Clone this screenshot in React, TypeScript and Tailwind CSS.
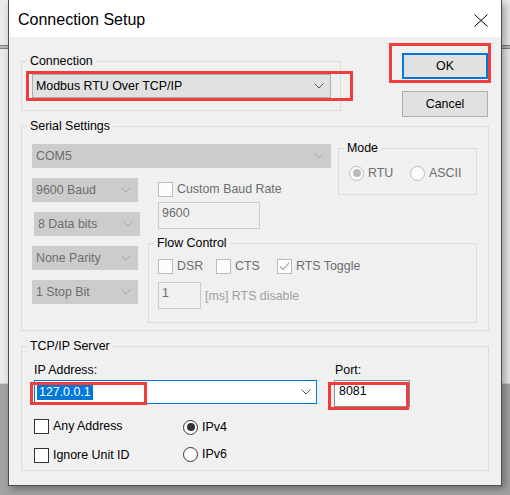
import type { ReactNode } from 'react';

function Chevron({ color }: { color: string }) {
  return (
    <svg width="10" height="6" viewBox="0 0 10 6" className="shrink-0">
      <polyline points="0.5,0.5 5,5 9.5,0.5" fill="none" stroke={color} strokeWidth="1" />
    </svg>
  );
}

function GroupBox({
  label,
  className,
  children,
}: {
  label: string;
  className: string;
  children?: ReactNode;
}) {
  return (
    <div className={`relative shrink-0 border border-[#dcdcdc] ${className}`}>
      <span className="absolute -top-[9px] left-[5px] bg-[#f0f0f0] px-[3px] leading-4 text-black">
        {label}
      </span>
      {children}
    </div>
  );
}

function Combo({
  text,
  disabled,
  className,
}: {
  text: string;
  disabled?: boolean;
  className: string;
}) {
  return (
    <div
      className={`flex shrink-0 items-center justify-between border pl-[3px] pr-[6px] ${
        disabled
          ? 'border-[#cccccc] bg-[#cccccc] text-[#6d6d6d]'
          : 'border-[#adadad] bg-[#e1e1e1] text-black'
      } ${className}`}
    >
      <span className="leading-4">{text}</span>
      <Chevron color={disabled ? '#a8a8a8' : '#5a5a5a'} />
    </div>
  );
}

function CheckBox({
  label,
  disabled,
  checked,
  className = '',
}: {
  label: string;
  disabled?: boolean;
  checked?: boolean;
  className?: string;
}) {
  return (
    <div className={`flex items-center ${className}`}>
      <span
        className={`flex h-[15px] w-[15px] shrink-0 items-center justify-center border ${
          disabled ? 'border-[#bcbcbc] bg-[#fcfcfc]' : 'border-[#333333] bg-white'
        }`}
      >
        {checked ? (
          <svg width="13" height="13" viewBox="0 0 13 13">
            <polyline
              points="2,6.5 5,9.5 11,3"
              fill="none"
              stroke={disabled ? '#a8a8a8' : '#333333'}
              strokeWidth="1.2"
            />
          </svg>
        ) : null}
      </span>
      <span className={`ml-[4px] leading-4 ${disabled ? 'text-[#6d6d6d]' : 'text-black'}`}>
        {label}
      </span>
    </div>
  );
}

function Radio({
  label,
  disabled,
  checked,
  className = '',
}: {
  label: string;
  disabled?: boolean;
  checked?: boolean;
  className?: string;
}) {
  return (
    <div className={`flex items-center ${className}`}>
      <span
        className={`flex h-[15px] w-[15px] shrink-0 items-center justify-center rounded-full border ${
          disabled ? 'border-[#bcbcbc] bg-[#fcfcfc]' : 'border-[#333333] bg-white'
        }`}
      >
        {checked ? (
          <span
            className={`h-[8px] w-[8px] rounded-full ${
              disabled ? 'bg-[#bcbcbc]' : 'bg-[#333333]'
            }`}
          />
        ) : null}
      </span>
      <span className={`ml-[4px] leading-4 ${disabled ? 'text-[#6d6d6d]' : 'text-black'}`}>
        {label}
      </span>
    </div>
  );
}

export default function App() {
  return (
    <div className="relative h-[495px] w-[510px] overflow-hidden font-['Liberation_Sans',Arial,sans-serif] text-[12.4px] text-black">
      {/* desktop behind the dialog */}
      <div className="flex h-full flex-col">
        <div className="h-[45px] bg-[#ebebeb]" />
        <div className="h-px bg-[#7f7f7f]" />
        <div className="h-[2px] bg-[#b8b8b8]" />
        <div className="h-px bg-[#7f7f7f]" />
        <div className="h-[334px] bg-[#ebebeb]" />
        <div className="h-px bg-[#c9d0da]" />
        <div className="flex-1 bg-[#a3a3a3]" />
      </div>

      {/* dialog window */}
      <div className="absolute left-[8px] top-0 flex h-[486px] w-[494px] flex-col border-x border-b border-[#4d4d4d] bg-[#f0f0f0] shadow-[3px_3px_8px_rgba(0,0,0,0.35)]">
        <div className="flex h-[37px] shrink-0 items-center justify-between bg-white pl-[9px] pr-[13px] pt-[3px]">
          <span className="text-[16px] leading-5">Connection Setup</span>
          <svg width="14" height="13" viewBox="0 0 14 13">
            <line x1="0.5" y1="0.5" x2="13.5" y2="12.5" stroke="#000" strokeWidth="1" />
            <line x1="13.5" y1="0.5" x2="0.5" y2="12.5" stroke="#000" strokeWidth="1" />
          </svg>
        </div>

        <div className="flex flex-col pl-[12px]">
          <div className="flex items-start">
            <GroupBox label="Connection" className="mt-[24px] h-[50px] w-[320px] pl-[10px] pt-[12px]">
              <Combo text="Modbus RTU Over TCP/IP" className="h-[24px] w-[299px]" />
            </GroupBox>
            <div className="ml-[61px] mt-[16px] flex flex-col gap-[12px]">
              <button className="h-[26px] w-[86px] border-2 border-[#0078d7] bg-[#e1e1e1] leading-4">
                OK
              </button>
              <button className="h-[26px] w-[86px] border border-[#adadad] bg-[#e1e1e1] leading-4">
                Cancel
              </button>
            </div>
          </div>

          <GroupBox label="Serial Settings" className="mt-[9px] h-[205px] w-[468px]">
            <div className="flex items-start">
              <div className="pl-[10px]">
                <Combo disabled text="COM5" className="mt-[17px] h-[24px] w-[299px]" />
                <div className="mt-[10px] flex items-start">
                  <Combo disabled text="9600 Baud" className="h-[24px] w-[106px]" />
                  <CheckBox disabled label="Custom Baud Rate" className="ml-[20px] mt-[3px]" />
                </div>
              </div>
              <GroupBox label="Mode" className="ml-[7px] mt-[21px] h-[47px] w-[139px] pl-[10px] pt-[16px]">
                <div className="flex">
                  <Radio disabled checked label="RTU" className="w-[61px]" />
                  <Radio disabled label="ASCII" />
                </div>
              </GroupBox>
            </div>

            <div className="flex items-start">
              <div className="flex w-[126px] shrink-0 flex-col pl-[10px]">
                <Combo disabled text="8 Data bits" className="ml-[2px] mt-[10px] h-[24px] w-[106px]" />
                <Combo disabled text="None Parity" className="mt-[10px] h-[24px] w-[106px]" />
                <Combo disabled text="1 Stop Bit" className="mt-[10px] h-[24px] w-[106px]" />
              </div>
              <div className="flex flex-col">
                <div className="ml-[10px] h-[27px] w-[102px] border border-[#cccccc] pl-[3px] pt-[2px] leading-4 text-[#6d6d6d]">
                  9600
                </div>
                <GroupBox label="Flow Control" className="mt-[14px] h-[80px] w-[329px] pl-[9px] pt-[14px]">
                  <div className="flex">
                    <CheckBox disabled label="DSR" className="w-[58px]" />
                    <CheckBox disabled label="CTS" className="w-[61px]" />
                    <CheckBox disabled checked label="RTS Toggle" />
                  </div>
                  <div className="mt-[8px] flex items-center">
                    <div className="h-[27px] w-[43px] border border-[#cccccc] pl-[3px] pt-[2px] leading-4 text-[#6d6d6d]">
                      1
                    </div>
                    <span className="ml-[4px] leading-4 text-[#a0a0a0]">[ms] RTS disable</span>
                  </div>
                </GroupBox>
              </div>
            </div>
          </GroupBox>

          <GroupBox label="TCP/IP Server" className="mt-[15px] h-[125px] w-[468px]">
            <div className="flex items-start pl-[12px]">
              <div className="flex flex-col">
                <span className="mt-[15px] leading-4">IP Address:</span>
                <div className="mt-[2px] flex h-[24px] w-[283px] items-center justify-between border border-[#0078d7] bg-white pl-[2px] pr-[5px]">
                  <span className="bg-[#0078d7] px-[2px] leading-4 text-white">127.0.0.1</span>
                  <Chevron color="#5a5a5a" />
                </div>
              </div>
              <div className="ml-[17px] flex flex-col">
                <span className="mt-[15px] pl-[1px] leading-4">Port:</span>
                <div className="mt-[2px] h-[27px] w-[76px] border border-[#8a8a8a] bg-white pl-[4px] pt-[2px] leading-4">
                  8081
                </div>
              </div>
            </div>
            <div className="mt-[11px] flex items-start pl-[12px]">
              <div className="flex w-[149px] shrink-0 flex-col gap-[13px]">
                <CheckBox label="Any Address" />
                <CheckBox label="Ignore Unit ID" />
              </div>
              <div className="mt-[1px] flex flex-col gap-[11px]">
                <Radio checked label="IPv4" />
                <Radio label="IPv6" />
              </div>
            </div>
          </GroupBox>
        </div>
      </div>

      {/* red annotation frames */}
      <div className="pointer-events-none absolute left-[26px] top-[71px] h-[30px] w-[327px] border-[3px] border-[#f03c3c]" />
      <div className="pointer-events-none absolute left-[389px] top-[43px] h-[40px] w-[102px] border-[3px] border-[#f03c3c]" />
      <div className="pointer-events-none absolute left-[30px] top-[382px] h-[23px] w-[117px] border-[3px] border-[#f03c3c]" />
      <div className="pointer-events-none absolute left-[328px] top-[382px] h-[28px] w-[81px] border-[3px] border-[#f03c3c]" />
    </div>
  );
}
